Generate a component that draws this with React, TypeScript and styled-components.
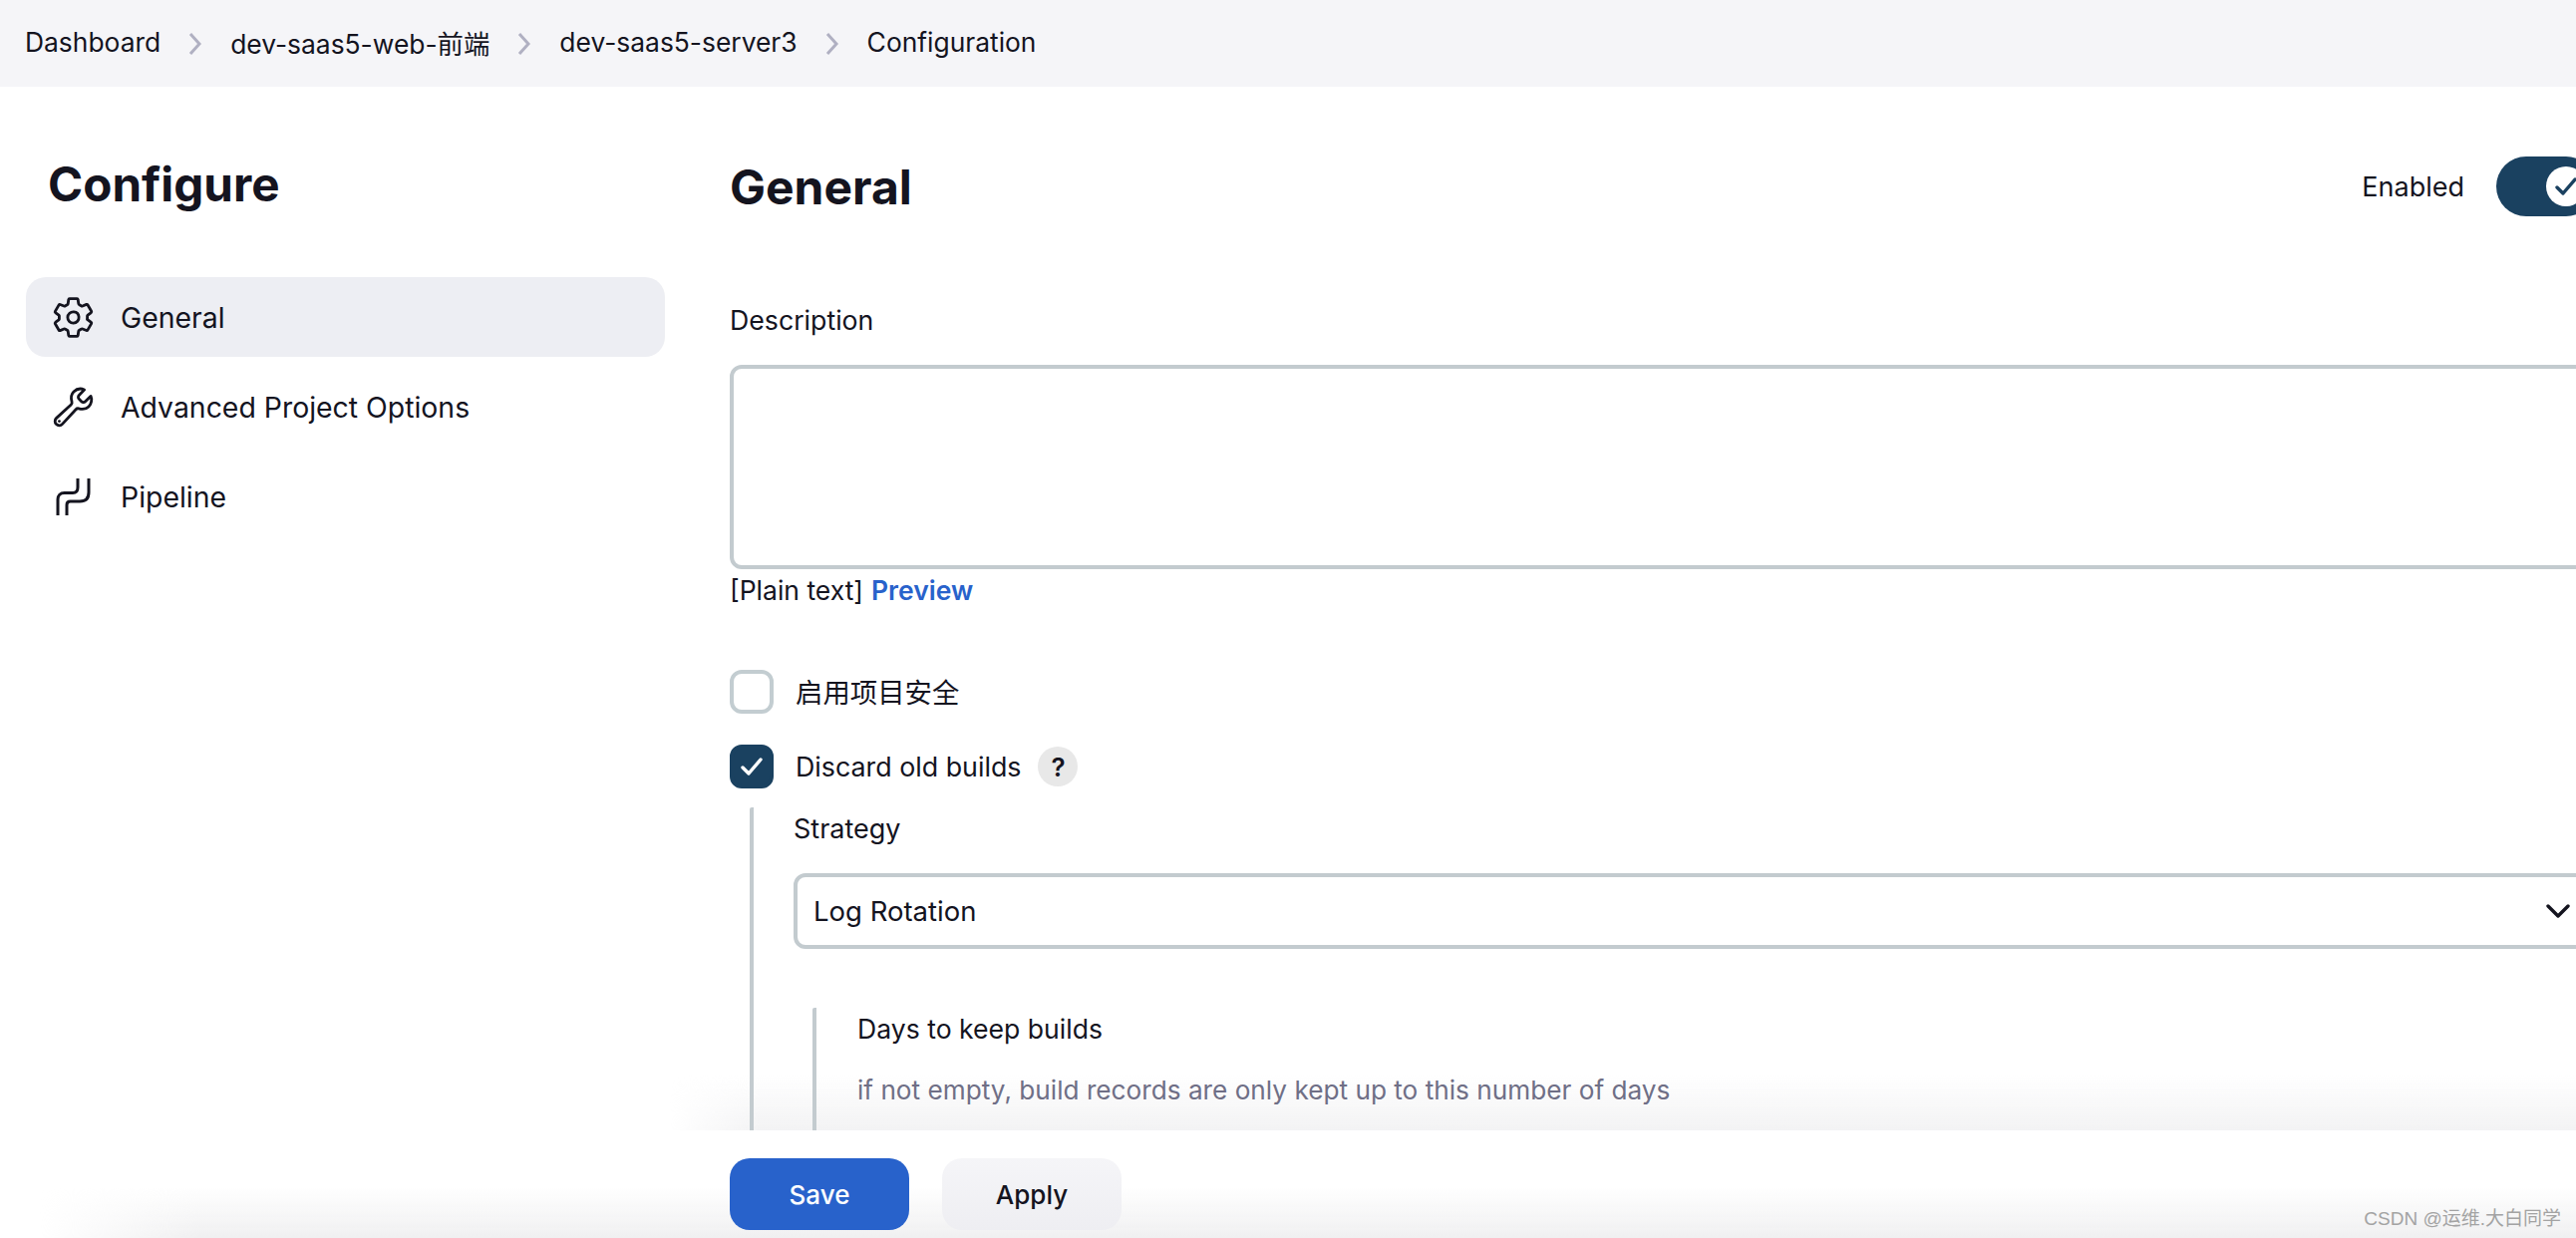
import { Fragment } from 'react';
import { createGlobalStyle, styled } from 'styled-components';
import { IoBuildOutline, IoSettingsOutline } from 'react-icons/io5';

const GlobalStyle = createGlobalStyle`
  html,
  body {
    margin: 0;
    background: #fff;
    color: #14141f;
    font-family: Inter, 'Noto Sans CJK SC', sans-serif;
    font-size: 27px;
  }
`;

const Page = styled.div`
  position: relative;
  display: flex;
  flex-direction: column;
  width: 2584px;
  height: 1242px;
  overflow: hidden;
`;

const Breadcrumbs = styled.nav`
  display: flex;
  flex: none;
  align-items: center;
  box-sizing: border-box;
  height: 87px;
  padding: 0 0 3px 25px;
  background: #f5f5f8;
  font-size: 26.4px;
`;

const Chevron = styled.svg`
  width: 16px;
  height: 24px;
  margin: 3px 27px 0 27px;
  fill: none;
  stroke: #b0b0c2;
  stroke-width: 3;
`;

const Body = styled.div`
  display: flex;
  flex: 1;
  min-height: 0;
`;

const Sidebar = styled.aside`
  flex: none;
  width: 641px;
  margin: 0 65px 0 26px;
`;

const SideTitle = styled.h1`
  margin: 70px 0 66px 22px;
  font-size: 47.6px;
  font-weight: 700;
  line-height: 55px;
`;

const SideList = styled.div`
  display: flex;
  flex-direction: column;
  gap: 10px;
`;

const SideItem = styled.div<{ $active?: boolean }>`
  display: flex;
  align-items: center;
  gap: 25px;
  height: 80px;
  padding-left: 25px;
  border-radius: 20px;
  background: ${(p) => (p.$active ? '#edeef3' : 'transparent')};
  font-size: 28.4px;
  font-weight: 420;

  svg {
    flex: none;
    width: 45px;
    height: 45px;
  }
`;

const Main = styled.main`
  display: flex;
  flex: 1;
  flex-direction: column;
  min-width: 0;
`;

const Scroller = styled.div`
  flex: 1;
  min-height: 0;
  overflow: hidden;
`;

const Form = styled.div`
  position: relative;
  z-index: 2;
  width: 1872px;
`;

const TitleRow = styled.div`
  display: flex;
  align-items: center;
  justify-content: space-between;
  height: 60px;
  margin-top: 70px;
`;

const Heading = styled.h2`
  margin: 0;
  font-size: 48px;
  font-weight: 700;
`;

const EnabledWrap = styled.div`
  display: flex;
  align-items: center;
  gap: 32px;
`;

const Toggle = styled.div`
  display: flex;
  align-items: center;
  justify-content: flex-end;
  box-sizing: border-box;
  width: 100px;
  height: 60px;
  padding-right: 10px;
  border-radius: 30px;
  background: #1a4160;
`;

const Knob = styled.div`
  display: flex;
  align-items: center;
  justify-content: center;
  width: 40px;
  height: 40px;
  border-radius: 50%;
  background: #fff;
`;

const Check = styled.svg<{ $color: string }>`
  width: 24px;
  height: 24px;
  fill: none;
  stroke: ${(p) => p.$color};
  stroke-width: 3.4;
  stroke-linecap: round;
  stroke-linejoin: round;
`;

const FieldLabel = styled.div`
  margin-top: 88px;
  line-height: 32px;
  font-size: 26.7px;
  font-weight: 420;
`;

const TextArea = styled.div`
  box-sizing: border-box;
  height: 205px;
  margin-top: 29px;
  border: 4px solid #c3cbcf;
  border-radius: 12px;
`;

const HelpLine = styled.div`
  margin-top: 5px;
  line-height: 32px;
  font-size: 26.5px;
`;

const PreviewLink = styled.a`
  margin-left: 8px;
  color: #2862cb;
  font-weight: 600;
`;

const CheckRow = styled.div<{ $top: number }>`
  display: flex;
  align-items: center;
  gap: 22px;
  height: 44px;
  margin-top: ${(p) => p.$top}px;
  font-size: 26.8px;
  font-weight: 420;
`;

const CjkLabel = styled.span`
  margin-top: -2px;
  font-size: 27.4px;
`;

const CheckBox = styled.div<{ $checked?: boolean }>`
  display: flex;
  flex: none;
  align-items: center;
  justify-content: center;
  box-sizing: border-box;
  width: 44px;
  height: 44px;
  border: 4px solid ${(p) => (p.$checked ? '#1a4160' : '#c3cdd1')};
  border-radius: 12px;
  background: ${(p) => (p.$checked ? '#1a4160' : '#fff')};
`;

const HelpBadge = styled.div`
  display: flex;
  align-items: center;
  justify-content: center;
  width: 40px;
  height: 40px;
  margin-left: -5px;
  border-radius: 50%;
  background: #e8e8e8;
  font-size: 26px;
  font-weight: 600;
`;

const Nested = styled.div`
  margin: 19px 0 0 20px;
  padding-left: 40px;
  border-left: 4px solid #c3cbcf;
  border-radius: 2px;
`;

const StrategyLabel = styled.div`
  padding-top: 6px;
  line-height: 32px;
  font-weight: 420;
`;

const SelectBox = styled.div`
  display: flex;
  align-items: center;
  justify-content: space-between;
  box-sizing: border-box;
  height: 76px;
  margin-top: 28px;
  padding: 0 22px 0 16px;
  border: 4px solid #c3cbcf;
  border-radius: 12px;
  font-size: 27.5px;
`;

const SelectArrow = styled.svg`
  width: 24px;
  height: 14px;
  fill: none;
  stroke: #14141f;
  stroke-width: 3.4;
  stroke-linecap: round;
  stroke-linejoin: round;
`;

const OptionBlock = styled.div`
  margin: 59px 0 0 19px;
  padding: 5px 0 60px 41px;
  border-left: 4px solid #c3cbcf;
  border-radius: 2px;
`;

const OptionTitle = styled.div`
  line-height: 32px;
  font-size: 26.6px;
  font-weight: 420;
`;

const OptionHint = styled.div`
  margin-top: 30px;
  line-height: 32px;
  font-size: 26.2px;
  color: #6f6f86;
`;

const Footer = styled.footer`
  position: relative;
  z-index: 1;
  display: flex;
  flex: none;
  gap: 33px;
  height: 108px;
  padding-top: 28px;
  box-sizing: border-box;

  &::before {
    content: '';
    position: absolute;
    top: -56px;
    left: -60px;
    right: 0;
    height: 56px;
    background: linear-gradient(to bottom, rgba(243, 243, 244, 0), #f3f3f4);
    mask-image: linear-gradient(to right, transparent, #000 90px);
  }
`;

const ActionButton = styled.button<{ $primary?: boolean }>`
  width: 180px;
  height: 72px;
  padding: 0;
  border: 0;
  border-radius: 20px;
  background: ${(p) => (p.$primary ? '#2862cb' : 'linear-gradient(to bottom, #f5f5f8, #eeeef2)')};
  color: ${(p) => (p.$primary ? '#fff' : '#14141f')};
  font: 500 26px Inter, sans-serif;
`;

const BottomFade = styled.div`
  position: absolute;
  left: 40px;
  right: 0;
  bottom: 0;
  height: 52px;
  background: linear-gradient(to bottom, rgba(240, 240, 241, 0), #f0f0f1);
  mask-image: linear-gradient(to right, transparent, #000 160px);
  pointer-events: none;
`;

const Watermark = styled.div`
  position: absolute;
  z-index: 2;
  right: 15px;
  bottom: 6px;
  color: #a3a3a3;
  font-family: 'Liberation Sans', 'Noto Sans CJK SC', sans-serif;
  font-size: 19px;
  line-height: 26px;
`;

const crumbs = ['Dashboard', 'dev-saas5-web-前端', 'dev-saas5-server3', 'Configuration'];

function PipelineIcon() {
  return (
    <svg viewBox="0 0 45 45" fill="none" stroke="currentColor" strokeWidth="3">
      <path d="M7 41V25c0-4 2.500-6.500 6.500-6.500H22c3 0 5-2 5-5.500V4" />
      <path d="M16 41V30.500c0-2.500 1-3.500 3.500-3.500H29c6 0 9-3.500 9-9V4" />
    </svg>
  );
}

export default function App() {
  return (
    <Page>
      <GlobalStyle />
      <Breadcrumbs>
        {crumbs.map((crumb, i) => (
          <Fragment key={crumb}>
            {i > 0 && (
              <Chevron viewBox="0 0 16 24">
                <path d="M3 2l9 10-9 10" />
              </Chevron>
            )}
            <span>{crumb}</span>
          </Fragment>
        ))}
      </Breadcrumbs>
      <Body>
        <Sidebar>
          <SideTitle>Configure</SideTitle>
          <SideList>
            <SideItem $active>
              <IoSettingsOutline />
              General
            </SideItem>
            <SideItem>
              <IoBuildOutline />
              Advanced Project Options
            </SideItem>
            <SideItem>
              <PipelineIcon />
              Pipeline
            </SideItem>
          </SideList>
        </Sidebar>
        <Main>
          <Scroller>
            <Form>
              <TitleRow>
                <Heading>General</Heading>
                <EnabledWrap>
                  Enabled
                  <Toggle>
                    <Knob>
                      <Check viewBox="0 0 24 24" $color="#1a4160">
                        <path d="M3 13l6 6L21 5" />
                      </Check>
                    </Knob>
                  </Toggle>
                </EnabledWrap>
              </TitleRow>
              <FieldLabel>Description</FieldLabel>
              <TextArea />
              <HelpLine>
                [Plain text]<PreviewLink>Preview</PreviewLink>
              </HelpLine>
              <CheckRow $top={64}>
                <CheckBox />
                <CjkLabel>启用项目安全</CjkLabel>
              </CheckRow>
              <CheckRow $top={31}>
                <CheckBox $checked>
                  <Check viewBox="0 0 24 24" $color="#fff">
                    <path d="M3 13l6 6L21 5" />
                  </Check>
                </CheckBox>
                Discard old builds
                <HelpBadge>?</HelpBadge>
              </CheckRow>
              <Nested>
                <StrategyLabel>Strategy</StrategyLabel>
                <SelectBox>
                  Log Rotation
                  <SelectArrow viewBox="0 0 24 14">
                    <path d="M2 2l10 10L22 2" />
                  </SelectArrow>
                </SelectBox>
                <OptionBlock>
                  <OptionTitle>Days to keep builds</OptionTitle>
                  <OptionHint>if not empty, build records are only kept up to this number of days</OptionHint>
                </OptionBlock>
              </Nested>
            </Form>
          </Scroller>
          <Footer>
            <ActionButton $primary>Save</ActionButton>
            <ActionButton>Apply</ActionButton>
          </Footer>
        </Main>
      </Body>
      <BottomFade />
      <Watermark>CSDN @运维.大白同学</Watermark>
    </Page>
  );
}
